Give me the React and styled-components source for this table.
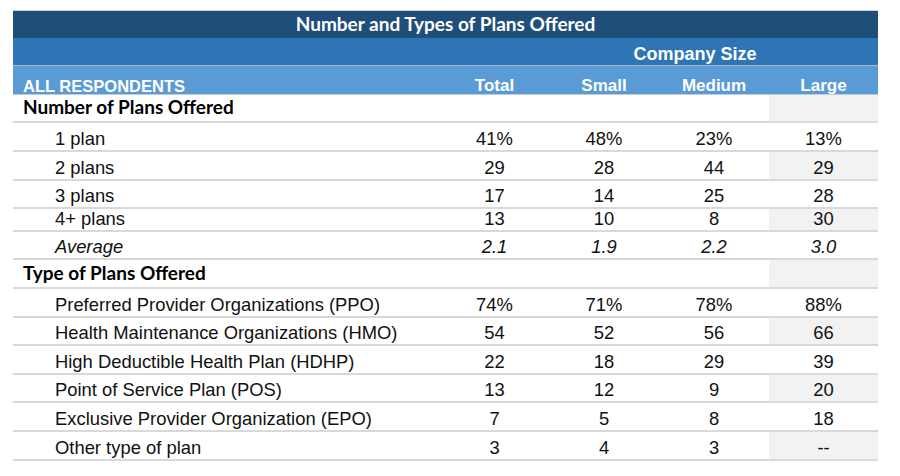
import React from 'react';
import styled, { createGlobalStyle } from 'styled-components';

const GlobalStyle = createGlobalStyle`
	body {
		margin: 0;
		background: #ffffff;
	}
`;

const rows = [
	{ type: 'section', label: 'Number of Plans Offered', h: 28 },
	{ label: '1 plan', values: ['41%', '48%', '23%', '13%'], h: 29 },
	{ label: '2 plans', values: ['29', '28', '44', '29'], h: 29 },
	{ label: '3 plans', values: ['17', '14', '25', '28'], h: 28 },
	{ label: '4+ plans', values: ['13', '10', '8', '30'], h: 23 },
	{ label: 'Average', values: ['2.1', '1.9', '2.2', '3.0'], h: 28, italic: true },
	{ type: 'section', label: 'Type of Plans Offered', h: 29 },
	{ label: 'Preferred Provider Organizations (PPO)', values: ['74%', '71%', '78%', '88%'], h: 29 },
	{ label: 'Health Maintenance Organizations (HMO)', values: ['54', '52', '56', '66'], h: 28 },
	{ label: 'High Deductible Health Plan (HDHP)', values: ['22', '18', '29', '39'], h: 29 },
	{ label: 'Point of Service Plan (POS)', values: ['13', '12', '9', '20'], h: 28 },
	{ label: 'Exclusive Provider Organization (EPO)', values: ['7', '5', '8', '18'], h: 29 },
	{ label: 'Other type of plan', values: ['3', '4', '3', '--'], h: 29 },
];

const App = () => {
	return (
		<Page>
			<GlobalStyle />
			<Table>
				<TitleBar>Number and Types of Plans Offered</TitleBar>
				<GroupBar>
					<GroupLabel>Company Size</GroupLabel>
				</GroupBar>
				<HeaderRow>
					<HeadLabel>ALL RESPONDENTS</HeadLabel>
					<HeadCell>Total</HeadCell>
					<HeadCell>Small</HeadCell>
					<HeadCell>Medium</HeadCell>
					<HeadCell>Large</HeadCell>
				</HeaderRow>
				{rows.map((row, i) => (
					<Row key={row.label} height={row.h}>
						{row.type === 'section' ? (
							<>
								<SectionLabel>{row.label}</SectionLabel>
								<Cell />
								<Cell />
								<Cell />
								<Cell shaded={i % 2 === 0} />
							</>
						) : (
							<>
								<Label italic={row.italic}>{row.label}</Label>
								{row.values.map((v, j) => (
									<Cell key={j} italic={row.italic} shaded={j === 3 && i % 2 === 0}>
										{v}
									</Cell>
								))}
							</>
						)}
					</Row>
				))}
			</Table>
		</Page>
	);
};

export default App;

const Page = styled.div`
	width: 900px;
	height: 476px;
	padding: 10px 0 0 13px;
	box-sizing: border-box;
	background: #ffffff;
`;

const Table = styled.div`
	width: 865px;
	display: flex;
	flex-direction: column;
	border-top: 1px solid #c9d3dd;
`;

const TitleBar = styled.div`
	height: 27px;
	background: #1f4e79;
	color: #ffffff;
	font-family: Lato, 'Open Sans', sans-serif;
	font-weight: 700;
	font-size: 19px;
	display: flex;
	align-items: center;
	justify-content: center;
	padding-bottom: 2px;
	box-sizing: border-box;
`;

const GroupBar = styled.div`
	height: 28px;
	background: #2e75b6;
	display: grid;
	grid-template-columns: 427px 438px;
	border-bottom: 1px solid #a9b9c9;
	box-sizing: border-box;
`;

const GroupLabel = styled.div`
	grid-column: 2;
	color: #ffffff;
	font-family: 'Liberation Sans', Arial, sans-serif;
	font-weight: 700;
	font-size: 18px;
	line-height: 1;
	display: flex;
	align-items: flex-end;
	justify-content: center;
	padding: 0 0 2px 72px;
`;

const HeaderRow = styled.div`
	height: 29px;
	background: #5b9bd5;
	display: grid;
	grid-template-columns: 427px 109px 110px 110px 109px;
	border-bottom: 1px solid #c3cdd6;
	box-sizing: border-box;
	color: #ffffff;
	font-family: 'Liberation Sans', Arial, sans-serif;
	font-weight: 700;
	font-size: 17px;
	line-height: 1;
`;

const HeadLabel = styled.div`
	display: flex;
	align-items: flex-end;
	padding: 0 0 0 10px;
	font-size: 16.5px;
`;

const HeadCell = styled.div`
	display: flex;
	align-items: flex-end;
	justify-content: center;
`;

const Row = styled.div`
	height: ${props => props.height}px;
	display: grid;
	grid-template-columns: 427px 109px 110px 110px 109px;
	border-bottom: 2px solid #d9d9d9;
	box-sizing: border-box;
	font-family: 'Liberation Sans', Arial, sans-serif;
	font-size: 18.4px;
	line-height: 1;
	color: #111111;
`;

const SectionLabel = styled.div`
	display: flex;
	align-items: flex-end;
	padding: 0 0 5px 10px;
	font-family: Lato, 'Open Sans', sans-serif;
	font-weight: 700;
	font-size: 19px;
	color: #000000;
	white-space: nowrap;
`;

const Label = styled.div`
	display: flex;
	align-items: flex-end;
	padding: 0 0 2px 42px;
	font-style: ${props => (props.italic ? 'italic' : 'normal')};
	white-space: nowrap;
`;

const Cell = styled.div`
	display: flex;
	align-items: flex-end;
	justify-content: center;
	padding-bottom: 2px;
	font-style: ${props => (props.italic ? 'italic' : 'normal')};
	background: ${props => (props.shaded ? '#f2f2f2' : 'transparent')};
`;
